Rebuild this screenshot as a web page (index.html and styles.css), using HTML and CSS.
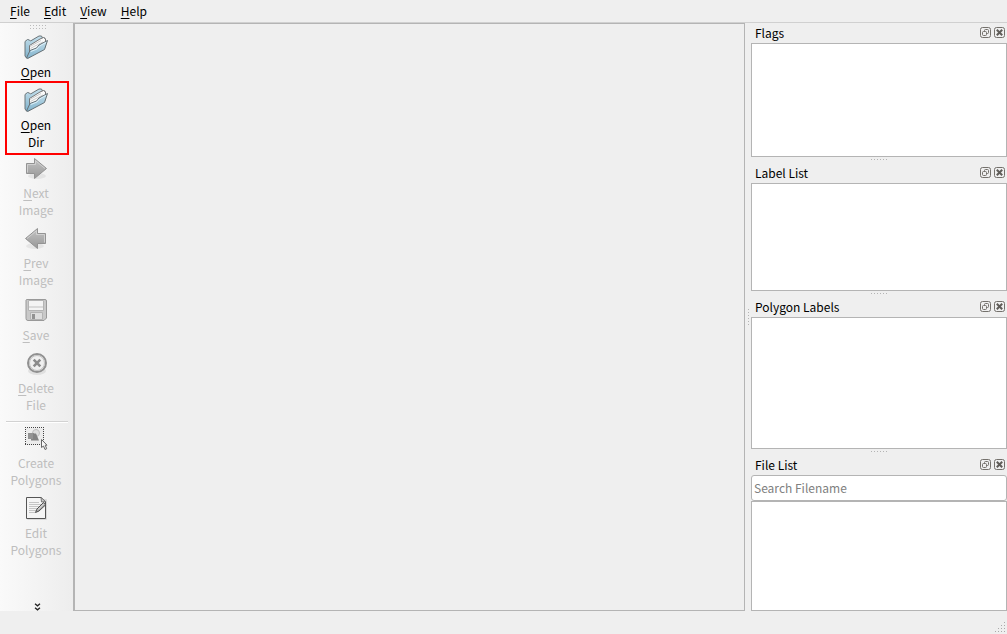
FILE: index.html
```html
<!DOCTYPE html>
<html lang="en">

<head>
    <meta charset="UTF-8">
    <meta name="viewport" content="width=device-width, initial-scale=1.0">
    <title>Labels</title>
    <link rel="stylesheet" href="styles.css">
</head>

<body>

    <!-- shared icon shapes -->
    <svg class="defs" width="0" height="0" aria-hidden="true">
        <defs>
            <linearGradient id="blue" x1="0" y1="0" x2="0" y2="1">
                <stop offset="0" stop-color="#c5dfeb"/>
                <stop offset="1" stop-color="#7fb2cc"/>
            </linearGradient>
            <linearGradient id="grey" x1="0" y1="0" x2="0" y2="1">
                <stop offset="0" stop-color="#c4c4c4"/>
                <stop offset="1" stop-color="#979797"/>
            </linearGradient>
            <symbol id="folder" viewBox="0 0 24 24">
                <path d="M1 6.500L3.500 4.500L5.500 5L6.500 6L15 1L17.500 1L18.500 3L21 3L21 8L5 22.500L2.500 23L1 21Z" fill="url(#blue)" stroke="#6b7478"/>
                <path d="M5.500 18V10.500L16 4L19.500 2.500L21.500 4V12Z" fill="#fafafa" stroke="#777"/>
                <path d="M6 11.500L17 5.500M6.500 13.500L10 11.500L19 7" fill="none" stroke="#ccc"/>
                <path d="M2.500 23L6 15.500L12.500 13L15 10L23.500 5.500L20.500 14.500L4 23.300Z" fill="url(#blue)" stroke="#656f74"/>
                <path d="M6.800 16.500L13 14L15.500 11L22 7.500" fill="none" stroke="#ddf0f8"/>
            </symbol>
            <symbol id="arrow" viewBox="0 0 24 24">
                <ellipse cx="13" cy="20" rx="9" ry="3" fill="#000" opacity=".06"/>
                <path d="M2.500 7.500H10.500V2.500L22.500 12.500L10.500 22.500V17.500H2.500Z" fill="url(#grey)" stroke="#939393"/>
                <path d="M3.500 16.500V8.500H11.500V4.700L21 12.500" fill="none" stroke="#d0d0d0"/>
            </symbol>
            <symbol id="float" viewBox="0 0 11 11">
                <rect x=".5" y=".5" width="10" height="10" rx="2" fill="none" stroke="#74716c"/>
                <rect x="4.500" y="2.500" width="4" height="4" rx="1" fill="none" stroke="#74716c"/>
                <rect x="2.500" y="4.500" width="4" height="4" rx="1" fill="#efefef" stroke="#74716c"/>
            </symbol>
            <symbol id="close" viewBox="0 0 11 11">
                <rect x=".5" y=".5" width="10" height="10" rx="2" fill="none" stroke="#74716c"/>
                <path d="M2.800 2.800L8.200 8.200M8.200 2.800L2.800 8.200" stroke="#5f5c58" stroke-width="2"/>
            </symbol>
        </defs>
    </svg>

    <nav class="menubar">
        <button><u>F</u>ile</button>
        <button><u>E</u>dit</button>
        <button><u>V</u>iew</button>
        <button><u>H</u>elp</button>
    </nav>

    <div class="main">
        <div class="toolbar">
            <div class="grip"></div>
            <button class="tool">
                <svg viewBox="0 0 24 24"><use href="#folder"/></svg>
                <span><u>O</u>pen</span>
            </button>
            <button class="tool marked">
                <svg viewBox="0 0 24 24"><use href="#folder"/></svg>
                <span><u>O</u>pen<br>Dir</span>
            </button>
            <button class="tool step" disabled>
                <svg viewBox="0 0 24 24"><use href="#arrow"/></svg>
                <span><u>N</u>ext<br>Image</span>
            </button>
            <button class="tool step" disabled>
                <svg viewBox="0 0 24 24"><g transform="matrix(-1 0 0 1 24 0)"><use href="#arrow"/></g></svg>
                <span><u>P</u>rev<br>Image</span>
            </button>
            <button class="tool" disabled>
                <svg viewBox="0 0 24 24">
                    <path d="M2.500 1.500H21Q22.500 1.500 22.500 3V20L20 22.500H4Q2 22.500 2 20.500V2Z" fill="#c9c9c9" stroke="#999"/>
                    <path d="M4.500 2.500H19.500V12.500H4.500Z" fill="#f4f4f4" stroke="#b4b4b4"/>
                    <path d="M5 9H19" stroke="#dadada" stroke-width="2"/>
                    <path d="M6.500 14.500H18.500V21.500H6.500Z" fill="#dedede" stroke="#b4b4b4"/>
                    <path d="M8 16H11V21H8Z" fill="#929292"/>
                </svg>
                <span><u>S</u>ave</span>
            </button>
            <button class="tool" disabled>
                <svg viewBox="0 0 24 24">
                    <ellipse cx="13" cy="20" rx="9" ry="4" fill="#000" opacity=".08"/>
                    <circle cx="13" cy="12" r="9" fill="#f0f0f0" stroke="#909090" stroke-width="2"/>
                    <circle cx="13" cy="12" r="7.500" fill="none" stroke="#c2c2c2"/>
                    <path d="M9.700 8.700L16.300 15.300M16.300 8.700L9.700 15.300" stroke="#8c8c8c" stroke-width="2.600"/>
                </svg>
                <span><u>D</u>elete<br>File</span>
            </button>
            <hr>
            <button class="tool" disabled>
                <svg viewBox="0 0 24 24">
                    <rect x="2" y="2" width="18" height="17" fill="#ececec"/>
                    <path d="M1 1.500H20M1 18.500H20M1.500 1V19M19.500 1V19" stroke="#444" stroke-dasharray="1 1" shape-rendering="crispEdges"/>
                    <circle cx="12" cy="7" r="3.500" fill="#ddd" stroke="#bcbcbc"/>
                    <path d="M4 7H10V13H4Z" fill="#939393"/>
                    <path d="M9 7.500H12L15 14.500H7V13H9Z" fill="#828282"/>
                    <path d="M17.500 13.500V21.500L19.500 20L21 23.500L22.700 22.700L21.200 19.200H23Z" fill="#f8f8f8" stroke="#666"/>
                </svg>
                <span>Create<br>Polygons</span>
            </button>
            <button class="tool" disabled>
                <svg viewBox="0 0 24 24">
                    <rect x="3" y="3" width="20" height="21" rx="1" fill="#000" opacity=".1"/>
                    <path d="M2.500 1.500H17L21.500 5.500V22.500H2.500Z" fill="#f5f5f5" stroke="#555"/>
                    <path d="M5 6.500H15M5 8.500H17M5 10.500H15M5 12.500H14M5 14.500H12M5 16.500H11" stroke="#c5c5c5"/>
                    <path d="M17 1.500L21.500 5.500L17.500 6Z" fill="#ccc" stroke="#777"/>
                    <path d="M19.500 6.500L22 8.500L15 15L11.500 16.500L13 13Z" fill="#aaa" stroke="#4f4f4f"/>
                    <path d="M14 13.500L19.500 8" stroke="#eee"/>
                </svg>
                <span>Edit<br>Polygons</span>
            </button>
            <button class="more" aria-label="More tools">
                <svg viewBox="0 0 7 8"><path d="M1 .8L3.500 2.800L6 .8M1 4.800L3.500 6.800L6 4.800" fill="none" stroke="#222" stroke-width="1.300"/></svg>
            </button>
        </div>

        <main class="canvas"></main>
        <div class="splitter"></div>

        <aside class="docks">
            <section class="dock flags">
                <header>
                    <h2>Flags</h2>
                    <button aria-label="Float Flags"><svg><use href="#float"/></svg></button>
                    <button aria-label="Close Flags"><svg><use href="#close"/></svg></button>
                </header>
                <div class="list"></div>
            </section>
            <section class="dock labels">
                <header>
                    <h2>Label List</h2>
                    <button aria-label="Float Label List"><svg><use href="#float"/></svg></button>
                    <button aria-label="Close Label List"><svg><use href="#close"/></svg></button>
                </header>
                <div class="list"></div>
            </section>
            <section class="dock polygons">
                <header>
                    <h2>Polygon Labels</h2>
                    <button aria-label="Float Polygon Labels"><svg><use href="#float"/></svg></button>
                    <button aria-label="Close Polygon Labels"><svg><use href="#close"/></svg></button>
                </header>
                <div class="list"></div>
            </section>
            <section class="dock files">
                <header>
                    <h2>File List</h2>
                    <button aria-label="Float File List"><svg><use href="#float"/></svg></button>
                    <button aria-label="Close File List"><svg><use href="#close"/></svg></button>
                </header>
                <input type="text" placeholder="Search Filename" aria-label="Search Filename">
                <div class="list"></div>
            </section>
        </aside>
    </div>

    <footer class="statusbar">
        <svg viewBox="0 0 11 11"><path d="M9 0h1v1h-1zM6 3h1v1h-1zM9 3h1v1h-1zM3 6h1v1h-1zM6 6h1v1h-1zM9 6h1v1h-1zM0 9h1v1h-1zM3 9h1v1h-1zM6 9h1v1h-1zM9 9h1v1h-1z" fill="#aaa"/></svg>
    </footer>

</body>

</html>
```
FILE: styles.css
```css
*{
    margin: 0;
    padding: 0;
    box-sizing: border-box;
}
body{
    height: 100vh;
    display: flex;
    flex-direction: column;
    background: #efefef;
    color: #000;
    font-family: "Noto Sans CJK SC", "Noto Sans", sans-serif;
    font-size: 12px;
    line-height: 17px;
    overflow: hidden;
}
button{
    border: none;
    background: none;
    color: inherit;
    font: inherit;
}
svg{
    display: block;
}
.defs{
    position: absolute;
}
u{
    text-decoration-thickness: 1px;
    text-underline-offset: 2px;
}

/* menu */
.menubar{
    display: flex;
    height: 23px;
    padding: 0 3px;
    border-bottom: 1px solid #d0d0d0;
}
.menubar button{
    padding: 0 7px 2px;
}

.main{
    flex: 1;
    min-height: 0;
    display: flex;
}

/* toolbar */
.toolbar{
    width: 73px;
    padding: 1px 4px 0 5px;
    display: flex;
    flex-direction: column;
    background: linear-gradient(to right, #fafafa, #ededed);
}
.grip{
    width: 17px;
    height: 5px;
    margin: 0 auto 3px;
    background: radial-gradient(circle, #bbb 1px, transparent 1px) 0 0 / 3px 3px;
}
.tool{
    position: relative;
    padding: 3px 2px 5px 0;
    display: flex;
    flex-direction: column;
    align-items: center;
    gap: 4px;
}
.step{
    padding: 1px 2px 7px 0;
}
.tool svg{
    width: 24px;
    height: 24px;
}
.tool:disabled{
    color: #bebebe;
}
.marked::after{
    content: "";
    position: absolute;
    inset: -4px 0 0;
    border: 2px solid #f00;
}
.toolbar hr{
    margin: 3px 1px 0;
    border: none;
    border-top: 1px solid #d2d2d2;
    border-bottom: 1px solid #fff;
}
.more{
    margin-top: auto;
    align-self: center;
}
.more svg{
    width: 7px;
    height: 8px;
}

.canvas{
    flex: 1;
    border: 1px solid #b4b4b4;
    border-left-width: 2px;
}
.splitter{
    width: 6px;
    display: flex;
    align-items: center;
    justify-content: center;
}
.splitter::before{
    content: "";
    width: 1px;
    height: 16px;
    background: repeating-linear-gradient(#b4b4b4 0 1px, transparent 1px 3px);
}

/* docks */
.docks{
    width: 256px;
    display: flex;
    flex-direction: column;
}
.dock{
    display: flex;
    flex-direction: column;
    flex-basis: 0;
}
.flags{
    flex-grow: 140;
}
.labels{
    flex-grow: 134;
}
.polygons{
    flex-grow: 158;
}
.files{
    flex-grow: 156;
}
.dock header{
    height: 20px;
    padding: 0 2px 1px 4px;
    display: flex;
    align-items: center;
    gap: 3px;
}
h2{
    flex: 1;
    font-size: 12px;
    font-weight: normal;
}
.dock header svg{
    width: 11px;
    height: 11px;
}
.list{
    flex: 1;
    border: 1px solid #b4b4b4;
    background: #fff;
}
.dock:not(:last-child)::after{
    content: "";
    align-self: center;
    width: 16px;
    height: 1px;
    margin: 2px 0 3px;
    background: repeating-linear-gradient(to right, #b4b4b4 0 1px, transparent 1px 3px);
}
input{
    height: 26px;
    padding: 0 2px 2px;
    border: 1px solid #b4b4b4;
    border-radius: 3px;
    background: #fff;
    font: inherit;
}
input::placeholder{
    color: #808080;
}

.statusbar{
    height: 23px;
    padding: 0 1px 1px;
    display: flex;
    align-items: flex-end;
    justify-content: flex-end;
}
.statusbar svg{
    width: 11px;
    height: 11px;
}
```
